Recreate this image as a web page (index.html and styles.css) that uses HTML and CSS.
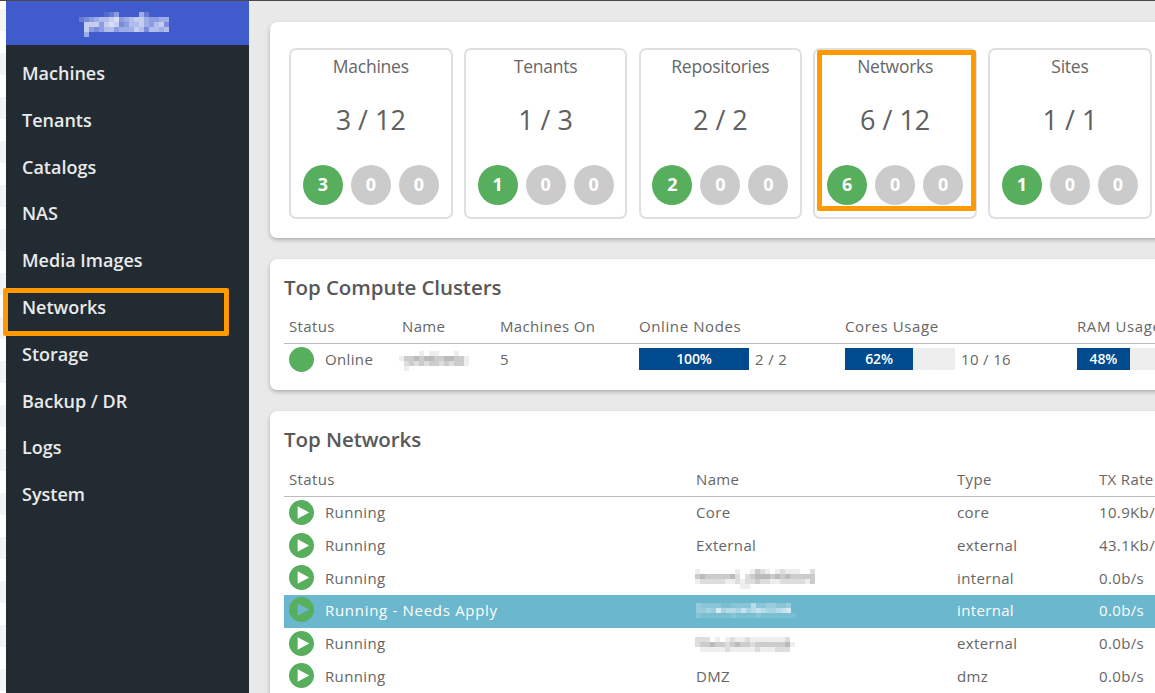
FILE: index.html
```html
<!DOCTYPE html>
<html lang="en">
<head>
<meta charset="utf-8">
<title>Dashboard</title>
<link rel="stylesheet" href="styles.css">
</head>
<body>
<div class="app">
  <aside class="sidebar">
    <div class="brand"><svg class="mosaic" data-color="#fff" data-rows="000001240000520000|234566784567754455|077747873466754673|074346645557636656|050000000000000000"></svg></div>
    <nav class="nav">
      <a>Machines</a><a>Tenants</a><a>Catalogs</a><a>NAS</a><a>Media Images</a><a class="marked">Networks</a><a>Storage</a><a>Backup / DR</a><a>Logs</a><a>System</a>
    </nav>
  </aside>
  <main class="main">
    <section class="panel summary">
      <article class="card"><h3>Machines</h3><p>3 / 12</p><div class="dots"><b class="on">3</b><b>0</b><b>0</b></div></article>
      <article class="card"><h3>Tenants</h3><p>1 / 3</p><div class="dots"><b class="on">1</b><b>0</b><b>0</b></div></article>
      <article class="card"><h3>Repositories</h3><p>2 / 2</p><div class="dots"><b class="on">2</b><b>0</b><b>0</b></div></article>
      <article class="card picked"><h3>Networks</h3><p>6 / 12</p><div class="dots"><b class="on">6</b><b>0</b><b>0</b></div></article>
      <article class="card"><h3>Sites</h3><p>1 / 1</p><div class="dots"><b class="on">1</b><b>0</b><b>0</b></div></article>
    </section>
    <section class="panel clusters">
      <h2>Top Compute Clusters</h2>
      <div class="row head"><span>Status</span><span>Name</span><span>Machines On</span><span class="wide">Online Nodes</span><span class="wide">Cores Usage</span><span class="wide">RAM Usage</span></div>
      <div class="row">
        <span class="status"><i class="bullet"></i><span>Online</span></span>
        <span><svg class="mosaic name early" data-color="#555" data-rows="00001011000100|13343443344331|02323233232331|01000000000000"></svg></span>
        <span>5</span>
        <span class="usage"><span class="bar"><span class="fill" style="width:100%">100%</span></span>2 / 2</span>
        <span class="usage"><span class="bar"><span class="fill" style="width:62%">62%</span></span>10 / 16</span>
        <span class="usage"><span class="bar"><span class="fill" style="width:48%">48%</span></span></span>
      </div>
    </section>
    <section class="panel networks">
      <h2>Top Networks</h2>
      <div class="row head"><span>Status</span><span>Name</span><span>Type</span><span>TX Rate</span></div>
      <div class="row"><span class="status"><svg class="play" viewBox="0 0 26 26"><path d="M13 0a13 13 0 1 0 0 26a13 13 0 1 0 0-26zM9 6.500v13l12-6.500z"/></svg><span>Running</span></span><span>Core</span><span>core</span><span>10.9Kb/s</span></div>
      <div class="row"><span class="status"><svg class="play" viewBox="0 0 26 26"><path d="M13 0a13 13 0 1 0 0 26a13 13 0 1 0 0-26zM9 6.500v13l12-6.500z"/></svg><span>Running</span></span><span>External</span><span>external</span><span>43.1Kb/s</span></div>
      <div class="row"><span class="status"><svg class="play" viewBox="0 0 26 26"><path d="M13 0a13 13 0 1 0 0 26a13 13 0 1 0 0-26zM9 6.500v13l12-6.500z"/></svg><span>Running</span></span><span><svg class="mosaic name" data-color="#555" data-rows="100000001001321012111002|343333342023444343433333|122222112122322112222213|000000000110000000000000"></svg></span><span>internal</span><span>0.0b/s</span></div>
      <div class="row active"><span class="status"><svg class="play" viewBox="0 0 26 26"><path d="M13 0a13 13 0 1 0 0 26a13 13 0 1 0 0-26zM9 6.500v13l12-6.500z"/></svg><span>Running - Needs Apply</span></span><span><svg class="mosaic name" data-color="#fff" data-rows="32222112222522332230|33437455464565445670|21111112111121111111"></svg></span><span>internal</span><span>0.0b/s</span></div>
      <div class="row"><span class="status"><svg class="play" viewBox="0 0 26 26"><path d="M13 0a13 13 0 1 0 0 26a13 13 0 1 0 0-26zM9 6.500v13l12-6.500z"/></svg><span>Running</span></span><span><svg class="mosaic name" data-color="#555" data-rows="22201012112111111120|23343323433233333341|01111121111121112220"></svg></span><span>external</span><span>0.0b/s</span></div>
      <div class="row"><span class="status"><svg class="play" viewBox="0 0 26 26"><path d="M13 0a13 13 0 1 0 0 26a13 13 0 1 0 0-26zM9 6.500v13l12-6.500z"/></svg><span>Running</span></span><span>DMZ</span><span>dmz</span><span>0.0b/s</span></div>
    </section>
  </main>
</div>
<script src="mosaic.js"></script>
</body>
</html>
```
FILE: mosaic.js
```js
// Fills each masked name with 5px cells; each digit is a cell's opacity in tenths.
document.querySelectorAll('.mosaic').forEach(function (svg) {
  var rows = svg.dataset.rows.split('|');
  svg.setAttribute('width', rows[0].length * 5);
  svg.setAttribute('height', rows.length * 5);
  rows.forEach(function (row, y) {
    row.split('').forEach(function (level, x) {
      var cell = document.createElementNS('http://www.w3.org/2000/svg', 'rect');
      cell.setAttribute('x', x * 5);
      cell.setAttribute('y', y * 5);
      cell.setAttribute('width', 5);
      cell.setAttribute('height', 5);
      cell.setAttribute('fill', svg.dataset.color);
      cell.setAttribute('fill-opacity', level / 10);
      svg.appendChild(cell);
    });
  });
});
```
FILE: styles.css
```css
*, *::after { box-sizing: border-box; }
body { margin: 0; font-family: "Open Sans", "Noto Sans", sans-serif; color: #666; background: #e9e9e9; overflow: hidden; }
h2, h3, p { margin: 0; }
.app { display: flex; height: 693px; overflow: hidden; border-top: 1px solid #4a4a4a; background: repeating-linear-gradient(#fff 0 8px, #f4f4f4 8px 30px, #fff 30px 44px); padding-left: 6px; }
.sidebar { flex: none; width: 243px; background: #232b32; }
.brand { height: 44px; background: #3f5bcc; padding: 11px 0 0 73px; }
.mosaic { display: block; shape-rendering: crispEdges; }
.nav { display: flex; flex-direction: column; padding-top: 5px; }
.nav a { height: 46.8px; line-height: 46.8px; padding-left: 16px; font-size: 18px; font-weight: 550; letter-spacing: 0; color: #e9eaeb; position: relative; white-space: nowrap; }
.nav .marked::after { content: ""; position: absolute; left: -3px; top: 4px; width: 226px; height: 48px; border: 5px solid #ff9900; border-radius: 2px; }
.main { flex: none; width: 1000px; padding: 21px 0 0 21px; display: flex; flex-direction: column; gap: 21px; background: #e9e9e9; }
.panel { background: #fff; border-radius: 7px; box-shadow: 0 2px 4px rgba(0,0,0,.25); flex: none; }
.summary { height: 216px; display: flex; gap: 11.2px; padding: 26px 19px; }
.card { position: relative; flex: none; width: 163.6px; height: 171px; border: 2px solid #e0e0e0; border-radius: 7px; text-align: center; }
.card h3 { font-size: 17.5px; font-weight: 400; letter-spacing: -.25px; line-height: 24px; padding-top: 4px; }
.card p { font-size: 27px; line-height: 36px; margin-top: 24px; color: #606060; }
.dots { display: flex; gap: 8px; justify-content: center; margin-top: 27px; }
.dots b { flex: none; width: 40px; height: 40px; border-radius: 50%; background: #cbcbcb; color: #fff; font-size: 18px; line-height: 39px; }
.dots .on { background: #57ae5d; }
.picked::after { content: ""; position: absolute; left: 2px; top: 0; width: 159px; height: 161px; border: 5px solid #ff9900; border-radius: 2px; }
.clusters { height: 131px; padding-left: 14px; }
.networks { height: 300px; padding-left: 14px; }
h2 { font-size: 20.5px; font-weight: 600; letter-spacing: -.07px; line-height: 28px; padding-top: 14px; color: #585858; }
.row { display: grid; align-items: center; height: 32.7px; font-size: 15px; letter-spacing: .35px; padding: 0 0 2px 5px; white-space: nowrap; }
.clusters .row { grid-template-columns: 113px 98px 139px 206px 232px 200px; }
.networks .row { grid-template-columns: 407px 261px 142px 200px; }
.row.head { height: 31px; border-bottom: 1px solid #bbb; margin-top: 13px; padding-bottom: 4px; }
.clusters .row.head { margin-top: 12px; }
.head .wide { letter-spacing: .6px; }
.status { display: flex; align-items: center; gap: 11px; }
.bullet { width: 25px; height: 25px; border-radius: 50%; background: #57ae5d; }
.play { width: 25px; height: 25px; fill: #57ae5d; fill-rule: evenodd; }
.name { margin-left: -1px; margin-top: 2px; }
.early { margin-left: -3px; margin-top: 3px; }
.usage { display: flex; align-items: center; gap: 6px; }
.bar { width: 110px; height: 22px; background: #eee; }
.fill { display: block; height: 22px; line-height: 22px; background: #004b8d; color: #fff; text-align: center; font-size: 14px; letter-spacing: -.1px; font-weight: 600; }
.row.active { background: #6bb7cd; color: #fff; font-weight: 500; padding-bottom: 3px; }
.active .status { letter-spacing: .7px; }
.active .name { margin-left: 0; }
```
